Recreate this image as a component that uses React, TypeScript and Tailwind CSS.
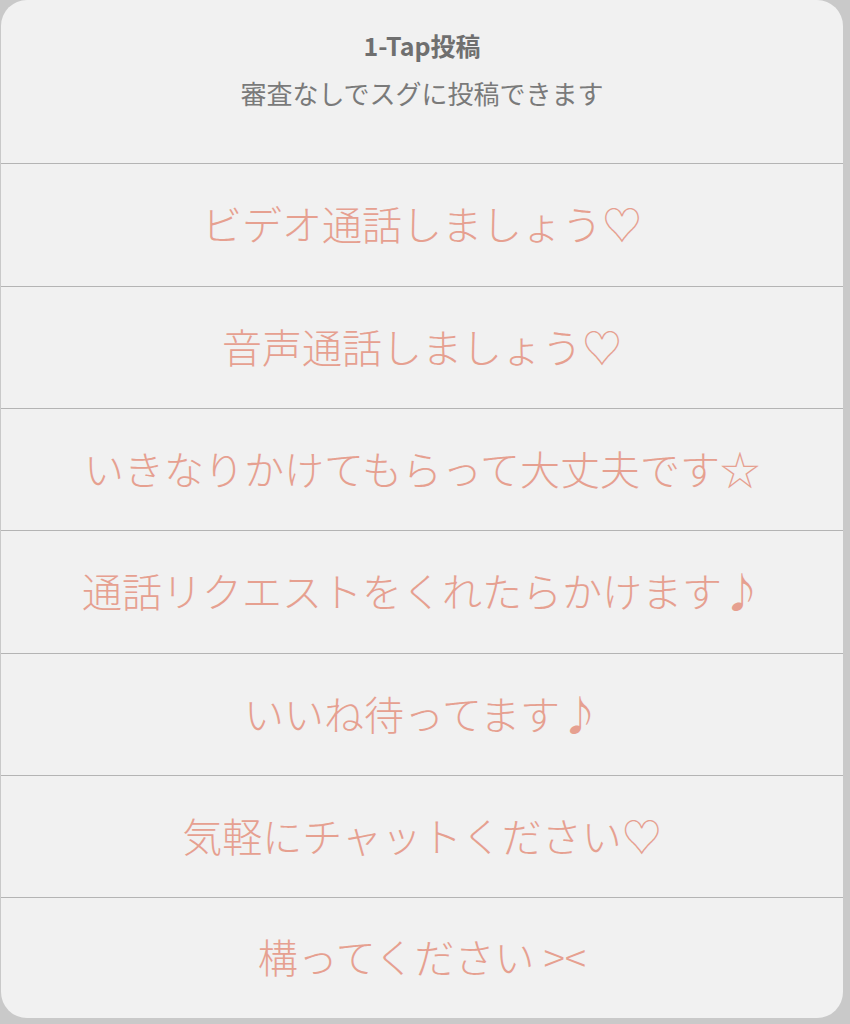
import React from "react";

const items: [string, string][] = [
  ["ビデオ通話しましょう♡", "h-[123px]"],
  ["音声通話しましょう♡", "h-[122px]"],
  ["いきなりかけてもらって大丈夫です☆", "h-[122px]"],
  ["通話リクエストをくれたらかけます♪", "h-[123px]"],
  ["いいね待ってます♪", "h-[122px]"],
  ["気軽にチャットください♡", "h-[122px]"],
  ["構ってください ><", "flex-1"],
];

export default function App() {
  return (
    <div
      className="w-[850px] h-[1024px] bg-[#c9c9c9] overflow-hidden"
      style={{ fontFamily: '"Noto Sans CJK JP", "Noto Sans", sans-serif' }}
    >
      <div className="ml-[1px] w-[842px] h-[1018px] rounded-[26px] bg-[#f1f1f1] overflow-hidden flex flex-col">
        <div className="h-[164px] shrink-0 flex flex-col items-center border-b border-[#b4b4b4]">
          <div className="mt-[29px] h-[32px] leading-[32px] text-[25px] font-bold text-[#6f6f6f]">
            1-Tap投稿
          </div>
          <div className="mt-[15px] h-[34px] leading-[34px] text-[26px] text-[#7a7a7a]">
            審査なしでスグに投稿できます
          </div>
        </div>
        {items.map(([t, h], i) => (
          <div
            key={i}
            className={
              h +
              " shrink-0 flex items-center justify-center pb-[4px] text-[40px] font-light text-[#e6a090] " +
              (i < items.length - 1 ? "border-b border-[#b4b4b4]" : "")
            }
          >
            {t}
          </div>
        ))}
      </div>
    </div>
  );
}
